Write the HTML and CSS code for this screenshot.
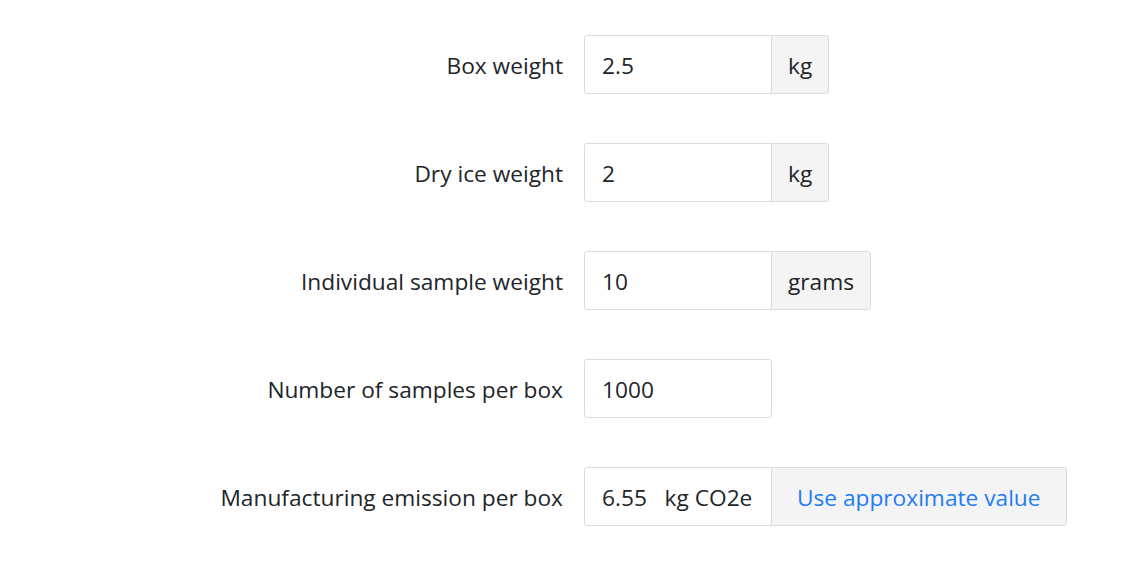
FILE: index.html
```html
<!DOCTYPE html>
<html lang="en">
<head>
    <meta charset="UTF-8">
    <title>Box emissions</title>
    <link rel="stylesheet" href="styles.css">
</head>
<body>
    <form class="form">
        <div class="row">
            <label class="label" for="boxWeight">Box weight</label>
            <div class="group">
                <input class="field" id="boxWeight" type="text" value="2.5">
                <span class="addon">kg</span>
            </div>
        </div>

        <div class="row">
            <label class="label" for="iceWeight">Dry ice weight</label>
            <div class="group">
                <input class="field" id="iceWeight" type="text" value="2">
                <span class="addon">kg</span>
            </div>
        </div>

        <div class="row">
            <label class="label" for="sampleWeight">Individual sample weight</label>
            <div class="group">
                <input class="field" id="sampleWeight" type="text" value="10">
                <span class="addon">grams</span>
            </div>
        </div>

        <div class="row">
            <label class="label" for="samples">Number of samples per box</label>
            <div class="group">
                <input class="field field-alone" id="samples" type="text" value="1000">
            </div>
        </div>

        <div class="row">
            <label class="label">Manufacturing emission per box</label>
            <div class="group">
                <span class="field static">6.55&nbsp;&nbsp; kg CO2e</span>
                <button class="addon addon-link" type="button">Use approximate value</button>
            </div>
        </div>
    </form>
</body>
</html>
```

FILE: styles.css
```css
:root {
    --text: #212529;
    --border: #dcdcdc;
    --addon-bg: #f4f4f4;
    --link: #1e7cf5;
}

body {
    margin: 0;
    font-family: 'Open Sans', 'Noto Sans', sans-serif;
    font-size: 22.7px;
    color: var(--text);
    background: #ffffff;
}

.form {
    padding-top: 35px;
    display: flex;
    flex-direction: column;
    gap: 49px;
}

.row {
    display: grid;
    grid-template-columns: 563px auto;
    column-gap: 21px;
    align-items: center;
}

.label {
    text-align: right;
    padding-top: 1px;
}

.group {
    display: flex;
    height: 59px;
}

.field {
    box-sizing: border-box;
    width: 188px;
    height: 59px;
    padding: 1px 17px 0;
    border: 1px solid var(--border);
    border-radius: 3px 0 0 3px;
    font-family: inherit;
    font-size: inherit;
    color: var(--text);
    background: #ffffff;
    outline: none;
}

.field-alone {
    border-radius: 3px;
}

.static {
    display: flex;
    align-items: center;
    white-space: nowrap;
}

.addon {
    display: flex;
    align-items: center;
    padding: 1px 16px 0;
    margin-left: -1px;
    border: 1px solid var(--border);
    border-radius: 0 3px 3px 0;
    background: var(--addon-bg);
    font-family: inherit;
    font-size: inherit;
    color: var(--text);
}

.addon-link {
    color: var(--link);
    padding: 1px 25px 0;
    cursor: pointer;
}
```
